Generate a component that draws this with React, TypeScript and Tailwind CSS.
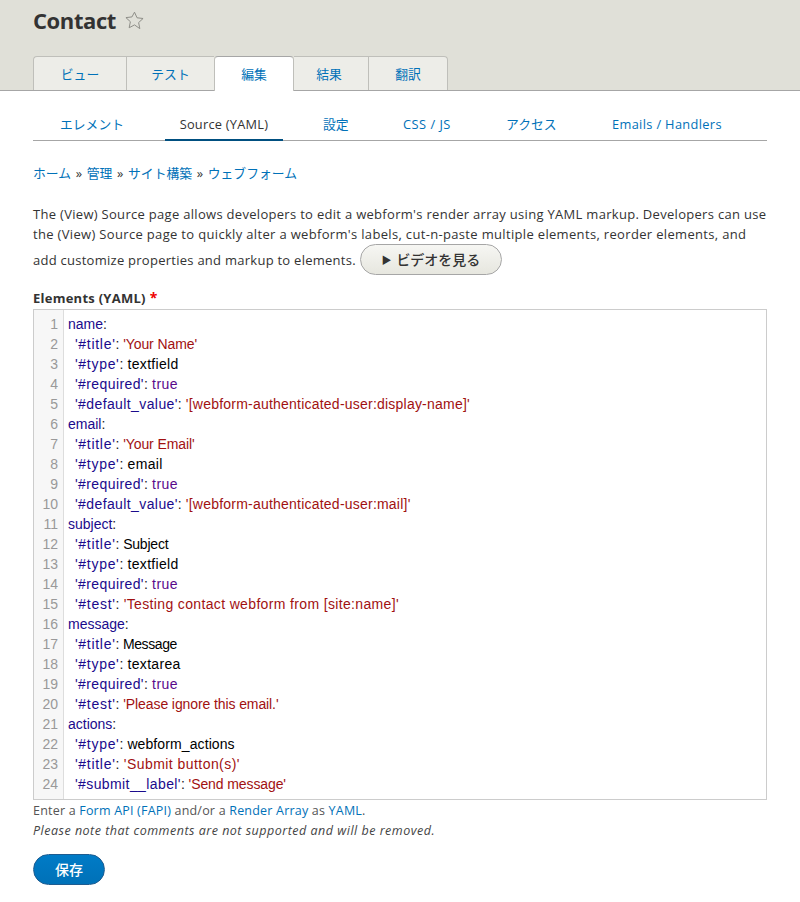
const sans = "font-['Open_Sans','Noto_Sans_CJK_JP',sans-serif]"

const primaryTabs = [
  { label: "ビュー", width: "w-[93px] rounded-tl-[4px] border-l" },
  { label: "テスト", width: "w-[88px] border-l" },
  { label: "編集", width: "w-[80px]", active: true },
  { label: "結果", width: "w-[74px] pr-[4px]" },
  { label: "翻訳", width: "w-[80px] rounded-tr-[4px] border-x" },
]

const secondaryTabs = [
  { label: "エレメント", width: "w-[132px] pl-[27px]" },
  { label: "Source (YAML)", width: "w-[118px] justify-center tracking-[0.25px]", active: true },
  { label: "設定", width: "w-[120px] pl-[40px]" },
  { label: "CSS / JS", width: "w-[103px] tracking-[0.5px]" },
  { label: "アクセス", width: "w-[106px]" },
  { label: "Emails / Handlers", width: "w-[147px] tracking-[0.35px]" },
]

type Kind = "str" | "bool" | "plain"
type Line = { key: string; value?: string; kind?: Kind; track?: string }

const yaml: Line[] = [
  { key: "name" },
  { key: "'#title'", value: "'Your Name'", kind: "str", track: "tracking-[-0.1px]" },
  { key: "'#type'", value: "textfield", kind: "plain", track: "tracking-[0.3px]" },
  { key: "'#required'", value: "true", kind: "bool", track: "tracking-[0.4px]" },
  { key: "'#default_value'", value: "'[webform-authenticated-user:display-name]'", kind: "str", track: "tracking-[0.22px]" },
  { key: "email" },
  { key: "'#title'", value: "'Your Email'", kind: "str", track: "tracking-[-0.1px]" },
  { key: "'#type'", value: "email", kind: "plain", track: "tracking-[0.3px]" },
  { key: "'#required'", value: "true", kind: "bool", track: "tracking-[0.4px]" },
  { key: "'#default_value'", value: "'[webform-authenticated-user:mail]'", kind: "str", track: "tracking-[0.22px]" },
  { key: "subject" },
  { key: "'#title'", value: "Subject", kind: "plain", track: "tracking-[-0.2px]" },
  { key: "'#type'", value: "textfield", kind: "plain", track: "tracking-[0.3px]" },
  { key: "'#required'", value: "true", kind: "bool", track: "tracking-[0.4px]" },
  { key: "'#test'", value: "'Testing contact webform from [site:name]'", kind: "str", track: "tracking-[0.35px]" },
  { key: "message" },
  { key: "'#title'", value: "Message", kind: "plain", track: "tracking-[-0.4px]" },
  { key: "'#type'", value: "textarea", kind: "plain", track: "tracking-[0.3px]" },
  { key: "'#required'", value: "true", kind: "bool", track: "tracking-[0.4px]" },
  { key: "'#test'", value: "'Please ignore this email.'", kind: "str", track: "tracking-[-0.1px]" },
  { key: "actions" },
  { key: "'#type'", value: "webform_actions", kind: "plain", track: "tracking-[0.1px]" },
  { key: "'#title'", value: "'Submit button(s)'", kind: "str", track: "tracking-[0.45px]" },
  { key: "'#submit__label'", value: "'Send message'", kind: "str", track: "tracking-[-0.1px]" },
]

const valueColor = {
  str: "text-[#a11111]",
  bool: "text-[#5a0a8c]",
  plain: "text-black",
}

function keyTrack(key: string) {
  if (!key.startsWith("'")) return ""
  return key.length <= 8 ? "tracking-[0.7px]" : "tracking-[0.4px]"
}

function Breadcrumb() {
  const items = ["ホーム", "管理", "サイト構築", "ウェブフォーム"]
  return (
    <div className="mt-[23px] flex h-[20px] items-center gap-[4.7px] text-[12.8px] text-[#333]">
      {items.map((item, i) => (
        <span key={item} className="flex items-center gap-[4.7px]">
          {i > 0 && <span>»</span>}
          <a className="text-[#0071b8]">{item}</a>
        </span>
      ))}
    </div>
  )
}

function CodeEditor() {
  return (
    <div className="flex h-[491px] border border-[#ccc] bg-white py-[4px] font-['Liberation_Sans',sans-serif] text-[14px] leading-[20px]">
      <div className="-my-[4px] w-[30px] shrink-0 border-r border-[#ddd] bg-[#f7f7f7] py-[4px] pr-[5px] text-right text-[#999]">
        {yaml.map((_, i) => (
          <div key={i} className="h-[20px]">{i + 1}</div>
        ))}
      </div>
      <div className="pl-[4px]">
        {yaml.map((line, i) => (
          <div key={i} className={`h-[20px] whitespace-pre ${line.value ? "pl-[7px]" : ""}`}>
            <span className={`text-[#1a0a8c] ${keyTrack(line.key)}`}>{line.key}</span>
            <span className="text-[#222]">:</span>
            {line.value && <span className={`${valueColor[line.kind ?? "plain"]} ${line.track}`}> {line.value}</span>}
          </div>
        ))}
      </div>
    </div>
  )
}

export default function App() {
  return (
    <div className={`min-h-[902px] w-[800px] bg-white ${sans} text-[13px] text-[#333]`}>
      <header className="h-[91px] border-b border-[#a6a6a6] bg-[#e0e0d8] pl-[33px]">
        <div className="flex h-[56px] items-start gap-[8px]">
          <h1 className="mt-[3px] text-[22px] font-bold leading-[34px] tracking-[-0.4px] text-[#333]">Contact</h1>
          <svg viewBox="0 0 24 24" className="mt-[10px] h-[21px] w-[21px]" fill="none" stroke="#8a8a84" strokeWidth="1.1">
            <path d="M12 2.5l2.9 6.4 6.9.8-5.1 4.7 1.4 6.9L12 17l-6.1 3.3 1.4-6.9-5.1-4.7 6.9-.8z" />
          </svg>
        </div>
        <nav className="flex h-[35px]">
          {primaryTabs.map((tab) => (
            <a
              key={tab.label}
              className={`flex items-center justify-center border-t pt-[2px] text-[12.8px] text-[#0071b8] ${tab.width} ${
                tab.active
                  ? "h-[35px] rounded-t-[4px] border-x border-x-[#bfbfba] border-t-[#a6a6a6] bg-white"
                  : "h-[34px] border-[#bfbfba] bg-[#edede8]"
              }`}
            >
              {tab.label}
            </a>
          ))}
        </nav>
      </header>

      <main className="px-[33px]">
        <nav className="mt-[14px] flex h-[36px] border-b border-[#a6a6a6]">
          {secondaryTabs.map((tab) => (
            <a
              key={tab.label}
              className={`flex h-[36px] items-center text-[12.8px] ${tab.width} ${
                tab.active ? "border-b-2 border-[#004f80] pt-[5px] text-[#333]" : "pt-[3px] text-[#0071b8]"
              }`}
            >
              {tab.label}
            </a>
          ))}
        </nav>

        <Breadcrumb />

        <div className="mt-[20px] text-[13px] leading-[20px] tracking-[0.3px]">
          <p>The (View) Source page allows developers to edit a webform's render array using YAML markup. Developers can use</p>
          <p className="tracking-[0.33px]">the (View) Source page to quickly alter a webform's labels, cut-n-paste multiple elements, reorder elements, and</p>
          <div className="flex items-center">
            <span className="tracking-[0.26px]">add customize properties and markup to elements.</span>
            <button className="ml-[4px] flex h-[31px] w-[142px] items-center justify-center gap-[5px] rounded-[16px] border border-[#a6a6a6] bg-gradient-to-b from-[#f6f6f3] to-[#e7e7df] text-[14px] font-medium tracking-normal text-[#333]">
              <span className="text-[10px] font-normal">▶</span>
              <span>ビデオを見る</span>
            </button>
          </div>
        </div>

        <div className="mt-[13px] flex h-[21px] items-center text-[13px] font-bold tracking-[0.25px]">
          <span>Elements (YAML)</span>
          <span className="-mt-[3px] ml-[4px] text-[14px] text-[#e00]">*</span>
        </div>

        <CodeEditor />

        <div className="mt-[1px] text-[12.5px] leading-[20px] tracking-[0.2px] text-[#555]">
          <p>
            Enter a <a className="text-[#0071b8]">Form API (FAPI)</a> and/or a <a className="text-[#0071b8]">Render Array</a> as <a className="text-[#0071b8]">YAML</a>.
          </p>
          <p className="italic tracking-[0.5px] text-[#444]">Please note that comments are not supported and will be removed.</p>
        </div>

        <button className="mt-[13px] h-[31px] w-[72px] rounded-[16px] border border-[#1e5c90] bg-gradient-to-b from-[#007bc6] to-[#0071b8] text-[14px] font-medium text-white">
          保存
        </button>
      </main>
    </div>
  )
}
